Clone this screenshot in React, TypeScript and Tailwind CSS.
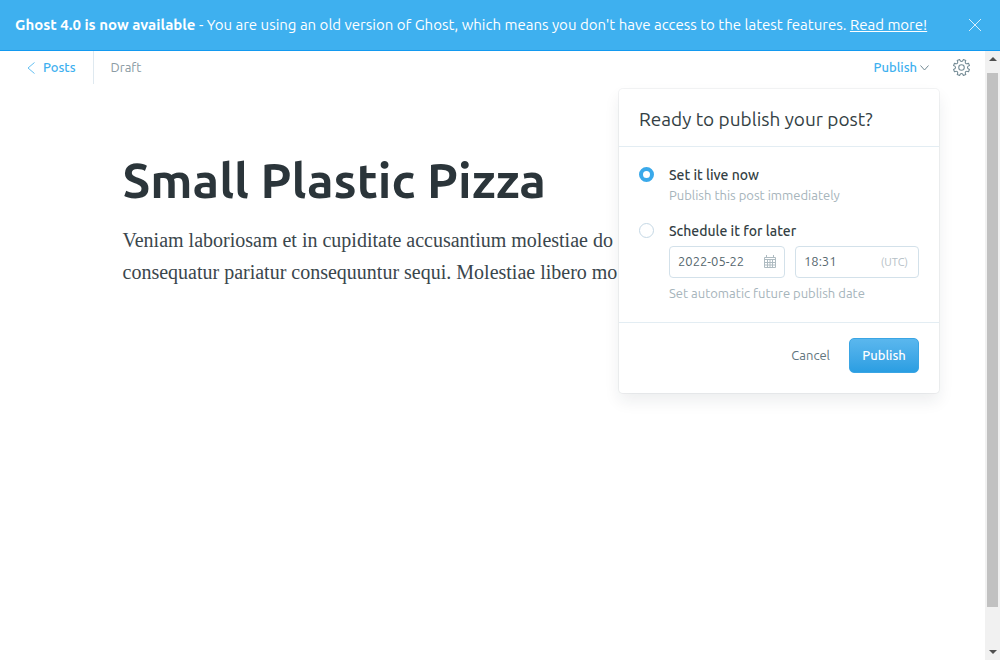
import React, { useState } from 'react';

const gear = (() => {
  const pts: string[] = [];
  const teeth = 8;
  const polar = (r: number, deg: number) => {
    const a = (deg * Math.PI) / 180;
    return `${(12 + r * Math.cos(a)).toFixed(2)} ${(12 + r * Math.sin(a)).toFixed(2)}`;
  };
  for (let i = 0; i < teeth; i++) {
    const c = i * 45 - 90 + 22.5;
    pts.push(`${i === 0 ? 'M' : 'L'}${polar(11.6, c - 9)}`);
    pts.push(`L${polar(11.6, c + 9)}`);
    pts.push(`C${polar(7.6, c + 11)} ${polar(7.6, c + 34)} ${polar(11.6, c + 36)}`);
  }
  return pts.join('') + 'Z';
})();

function GearIcon() {
  return (
    <svg viewBox="0 0 24 24" className="size-[17px]" fill="none" stroke="#738a94" strokeWidth="1.5" strokeLinejoin="round" aria-hidden="true">
      <path d={gear} />
      <circle cx="12" cy="12" r="3.9" />
    </svg>
  );
}

function CalendarIcon() {
  return (
    <svg viewBox="0 0 12 13" className="h-[13px] w-3 shrink-0" fill="none" stroke="#aebbc1" strokeWidth="1" aria-hidden="true">
      <path d="M.5 2.5h11v10H.5zM0 4.5h12M0 7.5h12M0 10h12M3.5 4v9M6 4v9M8.5 4v9M2.5 0v3M9.5 0v3" />
    </svg>
  );
}

function Banner() {
  return (
    <header className="flex h-[51px] shrink-0 items-center justify-between border-b border-[#139af0] bg-[#3eb0ef] pr-[18px] pl-[15px] text-[15px] text-white">
      <p>
        <strong className="font-bold">Ghost 4.0 is now available</strong> - You are using an old version of Ghost, which means you don't have access to the latest features.{' '}
        <a href="#more" className="underline">Read more!</a>
      </p>
      <button type="button" aria-label="Close">
        <svg viewBox="0 0 14 14" className="size-[14px]" stroke="#fff" strokeWidth="0.8" aria-hidden="true">
          <path d="M1 1l12 12M13 1L1 13" />
        </svg>
      </button>
    </header>
  );
}

function PublishMenu() {
  const [mode, setMode] = useState('now');
  const radio =
    'size-[15px] shrink-0 mt-[2px] appearance-none rounded-full border border-[#c5d8e5] bg-white checked:border-4 checked:border-[#3aa9ea]';
  return (
    <section className="absolute top-[31px] -right-[10px] z-10 w-[320px] rounded-[4px] bg-white shadow-[0_0_0_1px_rgba(99,114,130,0.08),0_8px_16px_rgba(27,39,51,0.08)]">
      <h2 className="border-b border-[#e3edf3] px-5 pt-[18px] pb-[14px] text-[19px] leading-[25px] text-[#343f44]">Ready to publish your post?</h2>
      <div className="border-b border-[#e3edf3] px-5 pt-[18px] pb-[19px]">
        <div className="flex gap-[15px]">
          <input id="now" type="radio" name="when" className={radio} checked={mode === 'now'} onChange={() => setMode('now')} />
          <div>
            <label htmlFor="now" className="block text-[14px] leading-5 font-medium text-[#343f44]">Set it live now</label>
            <p className="text-[13px] leading-5 text-[#a6b4bb]">Publish this post immediately</p>
          </div>
        </div>
        <div className="mt-4 flex gap-[15px]">
          <input id="later" type="radio" name="when" className={radio} checked={mode === 'later'} onChange={() => setMode('later')} />
          <div className="flex-1">
            <label htmlFor="later" className="block text-[14px] leading-5 font-medium text-[#343f44]">Schedule it for later</label>
            <div className="mt-[5px] flex gap-[10px]">
              <div className="flex h-8 w-[116px] items-center rounded-[4px] border border-[#d3e1ea] px-2">
                <input aria-label="Publish date" defaultValue="2022-05-22" className="w-full min-w-0 text-[13px] text-[#54666d] outline-none" />
                <CalendarIcon />
              </div>
              <div className="flex h-8 w-[124px] items-center rounded-[4px] border border-[#d3e1ea] pr-[10px] pl-2">
                <input aria-label="Publish time" defaultValue="18:31" className="w-full min-w-0 text-[13px] text-[#54666d] outline-none" />
                <span className="text-[11px] text-[#b5c0c6]">(UTC)</span>
              </div>
            </div>
            <p className="mt-[5px] text-[13px] leading-5 text-[#a6b4bb]">Set automatic future publish date</p>
          </div>
        </div>
      </div>
      <div className="flex items-center justify-end gap-[19px] px-5 pt-[15px] pb-5 text-[13px]">
        <button type="button" className="text-[#5f747d]">Cancel</button>
        <button type="button" className="h-[35px] w-[70px] rounded-[5px] border border-[#3aa5e4] bg-linear-to-b from-[#5ab7ee] to-[#2a9ee2] font-medium text-white">Publish</button>
      </div>
    </section>
  );
}

function Toolbar() {
  return (
    <nav className="flex h-[33px] items-center text-[13px]">
      <a href="#posts" className="flex h-full items-center gap-2 border-r border-[#dfe9f0] pr-[17px] pl-[27px] font-medium text-[#3eb0ef]">
        <svg viewBox="0 0 8 12" className="h-3 w-2" fill="none" stroke="currentColor" strokeWidth="0.8" aria-hidden="true">
          <path d="M7.500 .5L1 6l6.500 5.500" />
        </svg>
        Posts
      </a>
      <span className="pl-[17px] text-[#8a9ba3]">Draft</span>
      <div className="relative ml-auto">
        <button type="button" className="flex items-center gap-[3px] font-medium text-[#3eb0ef]">
          Publish
          <svg viewBox="0 0 9 6" className="h-[6px] w-[9px]" fill="none" stroke="#738a94" strokeWidth="1" aria-hidden="true">
            <path d="M.5 .5l4 4.500 4-4.500" />
          </svg>
        </button>
        <PublishMenu />
      </div>
      <button type="button" aria-label="Settings" className="mr-[15px] ml-6">
        <GearIcon />
      </button>
    </nav>
  );
}

function Scrollbar() {
  return (
    <div className="flex w-[15px] shrink-0 flex-col items-center bg-[#f1f1f1] pt-[6px] pb-[6px]" aria-hidden="true">
      <svg viewBox="0 0 8 4" className="h-1 w-2" fill="#505050"><path d="M0 4L4 0l4 4z" /></svg>
      <div className="mt-3 mb-[43px] w-[11px] flex-1 bg-[#c1c1c1]" />
      <svg viewBox="0 0 8 4" className="h-1 w-2" fill="#505050"><path d="M0 0l4 4 4-4z" /></svg>
    </div>
  );
}

export default function App() {
  return (
    <div className="flex min-h-screen flex-col bg-white font-['Ubuntu','Noto_Sans',sans-serif]">
      <Banner />
      <div className="flex flex-1">
        <main className="min-w-0 flex-1">
          <Toolbar />
          <article className="mx-auto max-w-[740px] pt-[68px]">
            <h1 className="text-[49px] leading-[56px] font-bold text-[#2b353a]">Small Plastic Pizza</h1>
            <p className="mt-4 font-['Liberation_Serif',serif] text-[20px] leading-8 text-[#3a464c]">
              Veniam laboriosam et in cupiditate accusantium molestiae do
              <br />
              consequatur pariatur consequuntur sequi. Molestiae libero mo
            </p>
          </article>
        </main>
        <Scrollbar />
      </div>
    </div>
  );
}
